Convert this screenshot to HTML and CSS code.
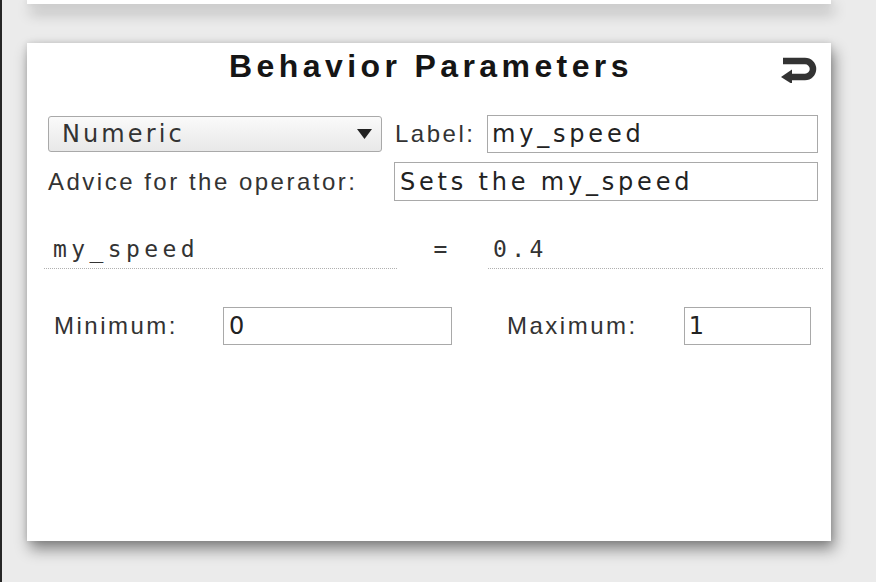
FILE: index.html
```html
<!DOCTYPE html>
<html lang="en">
<head>
<meta charset="utf-8">
<title>Behavior Parameters</title>
<link rel="stylesheet" href="styles.css">
</head>
<body>
<div class="app">
  <div class="card card-prev"></div>
  <section class="card params">
    <header class="params-head">
      <h1 class="params-title">Behavior Parameters</h1>
      <svg class="undo" viewBox="0 0 36 26" width="36" height="26" aria-hidden="true">
        <path d="M2 4H24a8 8 0 0 1 0 16H11" fill="none" stroke="#333" stroke-width="6.5"/>
        <path d="M0 20L11 12.5V27Z" fill="#333"/>
      </svg>
    </header>

    <div class="row row-type">
      <div class="select">
        <span class="select-text">Numeric</span>
        <svg class="select-arrow" viewBox="0 0 15 10" width="15" height="10" aria-hidden="true"><path d="M0 0H15L7.5 10Z" fill="#222"/></svg>
      </div>
      <span class="field-label label-name">Label:</span>
      <input class="text-input input-name" type="text" value="my_speed">
    </div>

    <div class="row row-advice">
      <span class="field-label">Advice for the operator:</span>
      <input class="text-input input-advice" type="text" value="Sets the my_speed">
    </div>

    <div class="row-value">
      <div class="value-field value-name">my_speed</div>
      <div class="value-eq">=</div>
      <div class="value-field value-num">0.4</div>
    </div>

    <div class="row row-range">
      <span class="field-label">Minimum:</span>
      <input class="text-input input-min" type="text" value="0">
      <span class="field-label label-max">Maximum:</span>
      <input class="text-input input-max" type="text" value="1">
    </div>
  </section>
</div>
</body>
</html>
```
FILE: styles.css
```css
html, body {
  margin: 0;
  padding: 0;
}

body {
  background: #ebebeb;
  font-family: "Liberation Sans", Arial, sans-serif;
  color: #333;
}

.app {
  height: 582px;
  box-sizing: border-box;
  border-left: 2px solid #262626;
  padding-left: 25px;
  overflow: hidden;
}

.card {
  width: 804px;
  background: #fff;
  box-shadow: 3px 8px 14px rgba(0, 0, 0, 0.45), 0 0 6px rgba(0, 0, 0, 0.12);
}

.card-prev {
  height: 4px;
}

.params {
  margin-top: 39px;
  height: 498px;
  box-sizing: border-box;
  padding-top: 3px;
}

.params-head {
  display: grid;
  grid-template-columns: 1fr auto 1fr;
  height: 40px;
}

.params-title {
  grid-column: 2;
  margin: 0;
  padding-left: 4px;
  font-size: 32px;
  font-weight: bold;
  letter-spacing: 4.4px;
  line-height: 40px;
  color: #151515;
}

.undo {
  grid-column: 3;
  justify-self: end;
  align-self: start;
  margin: 11px 14px 0 0;
}

.row {
  display: flex;
  align-items: center;
}

.row-type {
  margin: 29px 13px 0 21px;
}

.select {
  width: 334px;
  height: 36px;
  box-sizing: border-box;
  display: flex;
  align-items: center;
  padding: 0 9px 0 13px;
  border: 1px solid #a9a9a9;
  border-radius: 3px;
  background: linear-gradient(#fafafa, #e8e8e8);
  font-family: "DejaVu Sans", sans-serif;
  font-size: 24px;
  letter-spacing: 3.1px;
  color: #333;
}

.select-arrow {
  margin-left: auto;
}

.field-label {
  font-size: 24px;
  letter-spacing: 2.5px;
  color: #333;
  white-space: nowrap;
}

.label-name {
  margin-left: 13px;
}

.text-input {
  height: 38px;
  box-sizing: border-box;
  margin: 0;
  padding: 0 4px;
  border: 1px solid #a9a9a9;
  border-radius: 0;
  background: #fff;
  font-family: "DejaVu Sans", sans-serif;
  font-size: 24px;
  letter-spacing: 3.8px;
  color: #222;
  outline: none;
}

.input-name {
  width: 331px;
  margin-left: auto;
}

.row-advice {
  margin: 9px 13px 0 21px;
}

.input-advice {
  width: 424px;
  height: 39px;
  margin-left: auto;
  padding-left: 5px;
}

.row-value {
  display: grid;
  grid-template-columns: 353px 1fr 335px;
  margin: 33px 8px 0 17px;
}

.value-field {
  border-bottom: 1px dotted #b0b0b0;
  padding: 0 0 4px 9px;
  font-family: "DejaVu Sans Mono", monospace;
  font-size: 23px;
  letter-spacing: 4.4px;
  line-height: 30px;
  color: #333;
}

.value-num {
  padding-left: 5px;
}

.value-eq {
  justify-self: center;
  padding: 0 4px 4px 0;
  font-family: "DejaVu Sans Mono", monospace;
  font-size: 23px;
  line-height: 30px;
  color: #333;
}

.row-range {
  margin: 38px 0 0 27px;
}

.input-min {
  width: 229px;
  margin-left: 45px;
  padding-left: 5px;
}

.label-max {
  margin-left: 55px;
}

.input-max {
  width: 127px;
  margin-left: 46px;
}
```
